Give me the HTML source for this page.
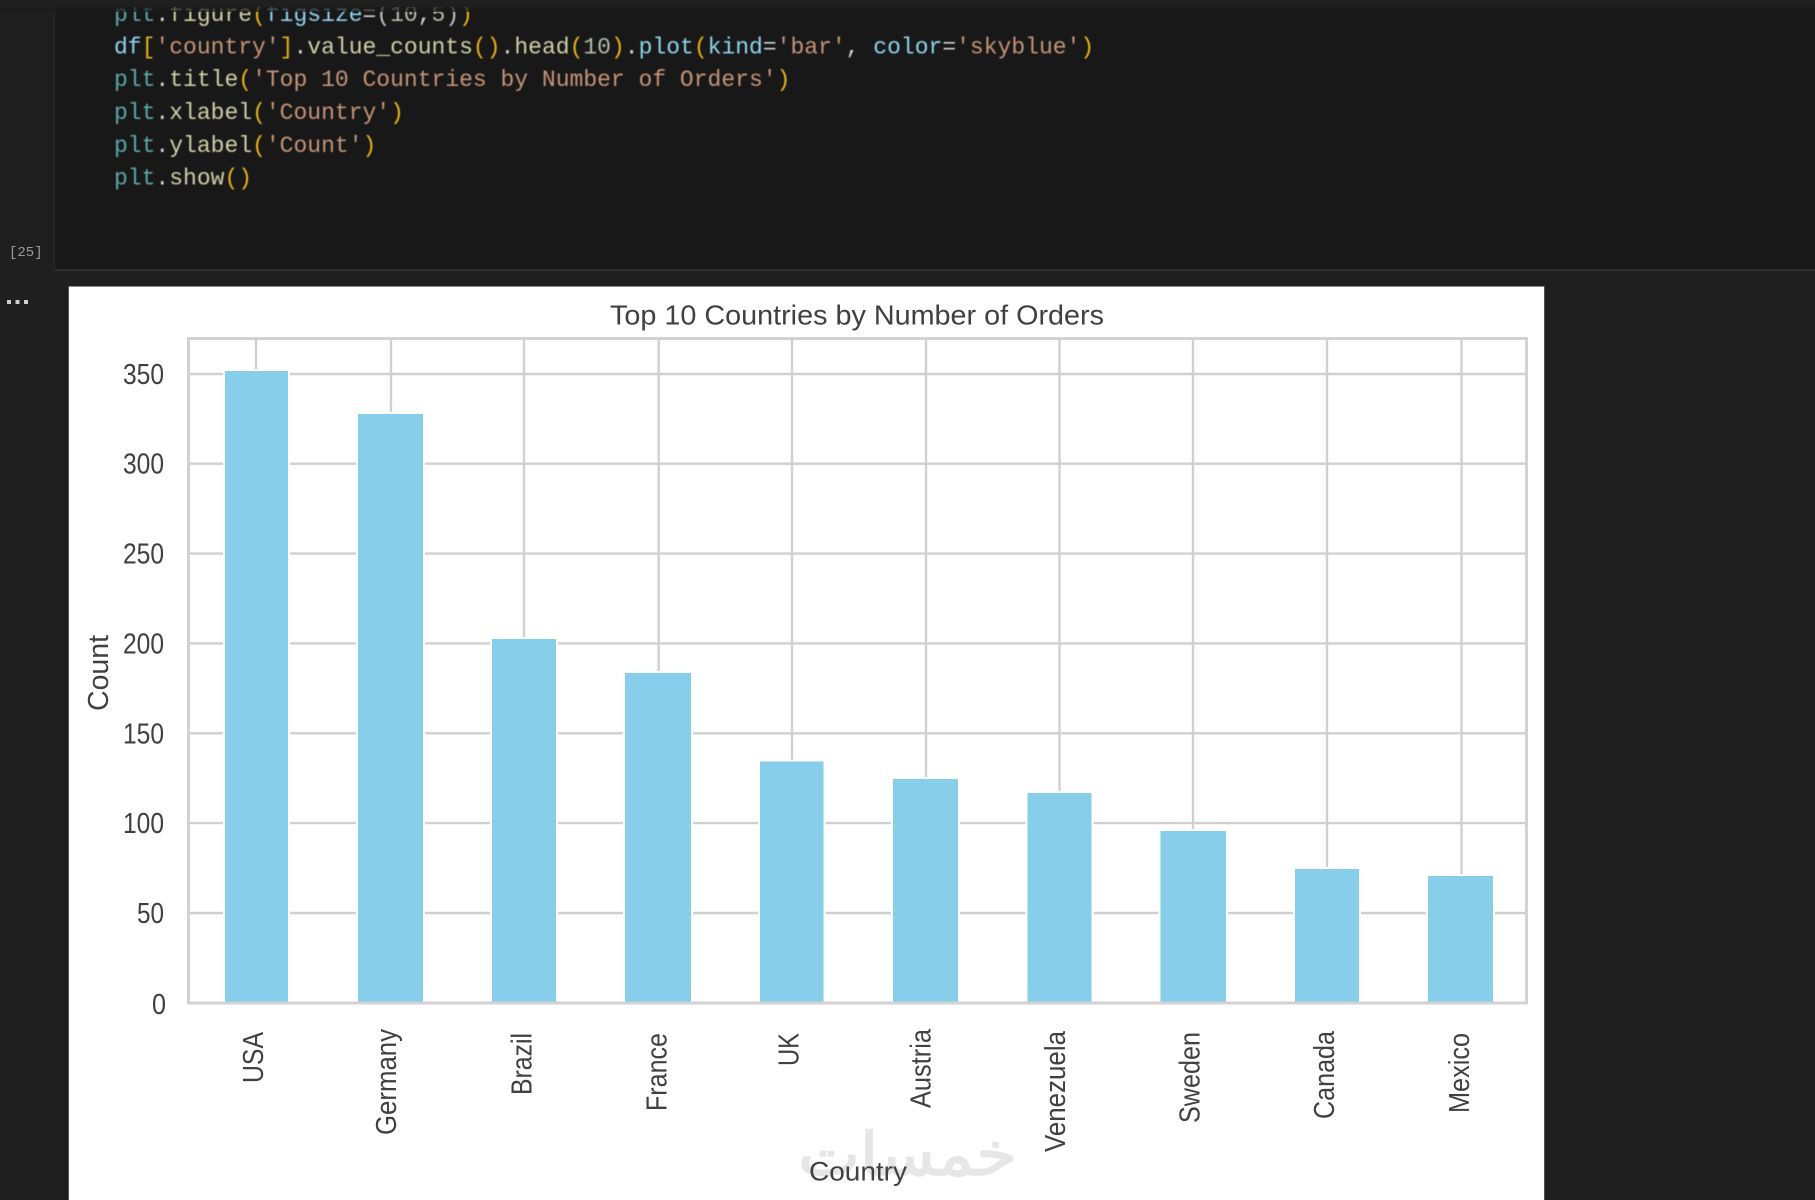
<!DOCTYPE html>
<html lang="en">
<head>
<meta charset="utf-8">
<title>Top 10 Countries by Number of Orders</title>
<style>
html,body{margin:0;padding:0;background:#1f1f1f;width:1815px;height:1200px;overflow:hidden}
svg{display:block}
.code{font-family:"Liberation Mono",monospace;font-size:23px;white-space:pre}
.s{font-family:"Liberation Sans",sans-serif;fill:#414141}
.m{fill:#5aa8a8}.d{fill:#d4d4d4}.f{fill:#cfcfa8}.p{fill:#e8b21a}.v{fill:#8fd4ea}.t{fill:#c49478}.n{fill:#b4bcae}.w{fill:#c4c4c4}
</style>
</head>
<body>
<svg xmlns="http://www.w3.org/2000/svg" width="1815" height="1200" viewBox="0 0 1815 1200">
<defs>
<filter id="b1" x="-5%" y="-5%" width="110%" height="110%"><feGaussianBlur stdDeviation="0.45"/></filter>
<filter id="b2" x="-5%" y="-5%" width="110%" height="110%"><feGaussianBlur stdDeviation="0.35"/></filter>
<linearGradient id="top" x1="0" y1="0" x2="0" y2="1"><stop offset="0" stop-color="#1c1c1c"/><stop offset="1" stop-color="#181818"/></linearGradient>
</defs>
<rect width="1815" height="1200" fill="#1f1f1f"/>
<rect x="54" y="7" width="1761" height="263" fill="#181818"/>
<rect x="54" y="7" width="1" height="263" fill="#2b2b2b"/>
<rect x="54" y="269" width="1761" height="2" fill="#2d2d2d"/>
<g class="code" filter="url(#b1)">
<text x="114" y="21" xml:space="preserve"><tspan class="m">plt</tspan><tspan class="d">.</tspan><tspan class="f">figure</tspan><tspan class="p">(</tspan><tspan class="v">figsize</tspan><tspan class="d">=</tspan><tspan class="w">(</tspan><tspan class="n">10</tspan><tspan class="d">,</tspan><tspan class="n">5</tspan><tspan class="w">)</tspan><tspan class="p">)</tspan></text>
<text x="114" y="53.5" xml:space="preserve"><tspan class="v">df</tspan><tspan class="p">[</tspan><tspan class="t">'country'</tspan><tspan class="p">]</tspan><tspan class="d">.</tspan><tspan class="f">value_counts</tspan><tspan class="p">()</tspan><tspan class="d">.</tspan><tspan class="f">head</tspan><tspan class="p">(</tspan><tspan class="n">10</tspan><tspan class="p">)</tspan><tspan class="d">.</tspan><tspan class="v">plot</tspan><tspan class="p">(</tspan><tspan class="v">kind</tspan><tspan class="d">=</tspan><tspan class="t">'bar'</tspan><tspan class="d">, </tspan><tspan class="v">color</tspan><tspan class="d">=</tspan><tspan class="t">'skyblue'</tspan><tspan class="p">)</tspan></text>
<text x="114" y="86" xml:space="preserve"><tspan class="m">plt</tspan><tspan class="d">.</tspan><tspan class="f">title</tspan><tspan class="p">(</tspan><tspan class="t">'Top 10 Countries by Number of Orders'</tspan><tspan class="p">)</tspan></text>
<text x="114" y="119" xml:space="preserve"><tspan class="m">plt</tspan><tspan class="d">.</tspan><tspan class="f">xlabel</tspan><tspan class="p">(</tspan><tspan class="t">'Country'</tspan><tspan class="p">)</tspan></text>
<text x="114" y="152" xml:space="preserve"><tspan class="m">plt</tspan><tspan class="d">.</tspan><tspan class="f">ylabel</tspan><tspan class="p">(</tspan><tspan class="t">'Count'</tspan><tspan class="p">)</tspan></text>
<text x="114" y="184.5" xml:space="preserve"><tspan class="m">plt</tspan><tspan class="d">.</tspan><tspan class="f">show</tspan><tspan class="p">()</tspan></text>
</g>
<rect x="0" y="0" width="1815" height="7" fill="#1f1f1f"/>
<rect x="0" y="7" width="1815" height="5" fill="url(#top)" opacity="0.7"/>
<text x="9" y="256" font-family="'Liberation Mono',monospace" font-size="14" fill="#9a9a9a" filter="url(#b2)">[25]</text>
<rect x="7" y="300" width="4" height="4" fill="#cfcfcf"/><rect x="15.5" y="300" width="4" height="4" fill="#cfcfcf"/><rect x="24" y="300" width="4" height="4" fill="#cfcfcf"/>

<rect x="68.5" y="286" width="1476" height="914" fill="#8a8a86"/>
<rect x="69" y="287" width="1475" height="913" fill="#ffffff"/>

<text x="798" y="1175" text-anchor="end" direction="rtl" font-family="'DejaVu Sans',sans-serif" font-size="60" fill="#e6e6e6" stroke="#e6e6e6" stroke-width="1.5" textLength="219" lengthAdjust="spacingAndGlyphs">خمسات</text>

<g stroke="#d0d0d0" stroke-width="2.4" fill="none" filter="url(#b2)">
<path d="M188 374H1527M188 463.7H1527M188 553.6H1527M188 643.4H1527M188 733.3H1527M188 823.1H1527M188 913H1527"/>
<path d="M256 338V1003M391 338V1003M524 338V1003M658.7 338V1003M792 338V1003M926 338V1003M1059.5 338V1003M1193 338V1003M1327 338V1003M1461.5 338V1003"/>
</g>
<g fill="#87ceeb" stroke="#ffffff" stroke-width="4" paint-order="stroke">
<rect x="225" y="371" width="63" height="631"/>
<rect x="358" y="414" width="65" height="588"/>
<rect x="492" y="639" width="64" height="363"/>
<rect x="625" y="673" width="66" height="329"/>
<rect x="760" y="761.5" width="63.5" height="240.5"/>
<rect x="893" y="779" width="65" height="223"/>
<rect x="1027.5" y="793" width="64" height="209"/>
<rect x="1160.5" y="831" width="65.5" height="171"/>
<rect x="1295" y="869" width="64" height="133"/>
<rect x="1428" y="876" width="65" height="126"/>
</g>
<rect x="188.5" y="338.5" width="1338" height="664.5" fill="none" stroke="#d2d2d2" stroke-width="3"/>

<g class="s" filter="url(#b2)">
<text x="610" y="324.5" font-size="27.5" textLength="494" lengthAdjust="spacingAndGlyphs">Top 10 Countries by Number of Orders</text>
<g font-size="28.5">
<text x="123" y="384" textLength="41" lengthAdjust="spacingAndGlyphs">350</text>
<text x="123" y="473.7" textLength="41" lengthAdjust="spacingAndGlyphs">300</text>
<text x="123" y="563.6" textLength="41" lengthAdjust="spacingAndGlyphs">250</text>
<text x="123" y="653.4" textLength="41" lengthAdjust="spacingAndGlyphs">200</text>
<text x="123" y="743.3" textLength="41" lengthAdjust="spacingAndGlyphs">150</text>
<text x="123" y="833.1" textLength="41" lengthAdjust="spacingAndGlyphs">100</text>
<text x="137" y="923" textLength="27" lengthAdjust="spacingAndGlyphs">50</text>
<text x="152" y="1014" textLength="14" lengthAdjust="spacingAndGlyphs">0</text>
</g>
<text x="809" y="1180.5" font-size="27" textLength="98" lengthAdjust="spacingAndGlyphs">Country</text>
<text transform="translate(108,711) rotate(-90)" font-size="29" textLength="76" lengthAdjust="spacingAndGlyphs">Count</text>
<g font-size="28.5">
<text transform="translate(263,1083) rotate(-90)" textLength="51" lengthAdjust="spacingAndGlyphs">USA</text>
<text transform="translate(396,1135) rotate(-90)" textLength="106" lengthAdjust="spacingAndGlyphs">Germany</text>
<text transform="translate(531.5,1095) rotate(-90)" textLength="62" lengthAdjust="spacingAndGlyphs">Brazil</text>
<text transform="translate(666.5,1111) rotate(-90)" textLength="78" lengthAdjust="spacingAndGlyphs">France</text>
<text transform="translate(798.5,1066) rotate(-90)" textLength="33" lengthAdjust="spacingAndGlyphs">UK</text>
<text transform="translate(930.5,1108) rotate(-90)" textLength="79" lengthAdjust="spacingAndGlyphs">Austria</text>
<text transform="translate(1065,1152) rotate(-90)" textLength="121" lengthAdjust="spacingAndGlyphs">Venezuela</text>
<text transform="translate(1199.5,1123) rotate(-90)" textLength="91" lengthAdjust="spacingAndGlyphs">Sweden</text>
<text transform="translate(1334,1119) rotate(-90)" textLength="88" lengthAdjust="spacingAndGlyphs">Canada</text>
<text transform="translate(1469,1113) rotate(-90)" textLength="80" lengthAdjust="spacingAndGlyphs">Mexico</text>
</g>
</g>
</svg>
</body>
</html>
